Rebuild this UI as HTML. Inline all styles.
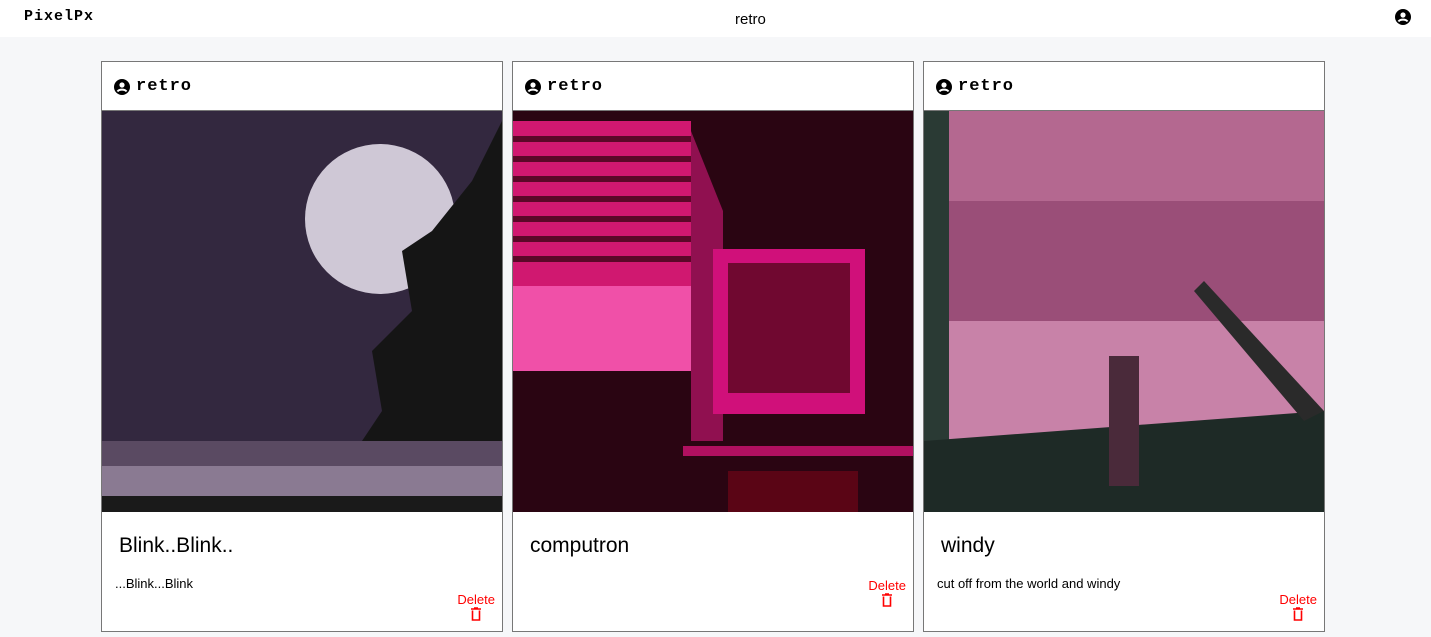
<!DOCTYPE html>
<html><head><style>
body{margin:0;width:1431px;height:637px;background:#f6f7f9;font-family:"Liberation Sans",sans-serif;overflow:hidden;position:relative}
.nav{position:absolute;top:0;left:0;width:1431px;height:37px;background:#fff}
.logo{position:absolute;left:24px;top:8px;font-family:"Liberation Mono",monospace;font-weight:bold;font-size:15px;letter-spacing:1px}
.title{position:absolute;left:735px;top:11px;font-size:15px}
.card{position:absolute;top:61px;width:400px;height:569px;border:1px solid #777;background:#fff;box-sizing:content-box}
.hd{height:48px;border-bottom:1px solid #777;position:relative}
.hd span{position:absolute;left:34px;top:15px;font-family:"Liberation Mono",monospace;font-weight:bold;font-size:17px;letter-spacing:1px}
.img{width:400px;height:401px;position:relative;overflow:hidden}
.t{position:absolute;left:17px;top:472px;font-size:21px}
.d{position:absolute;left:13px;top:514px;font-size:13px}
.del{position:absolute;right:7px;color:red;font-size:13px;text-align:center}
</style></head><body>
<div class="nav"><div class="logo">PixelPx</div><div class="title">retro</div>
<svg style="position:absolute;left:1395px;top:9px" width="16" height="16" viewBox="0 0 16 16"><circle cx="8" cy="8" r="8"/><circle cx="8" cy="6" r="2.6" fill="#fff"/><path d="M3.5 12.5c1.5-2.5 7.5-2.5 9 0" stroke="#fff" stroke-width="2" fill="none"/></svg></div>

<div class="card" style="left:101px">
<div class="hd"><svg style="position:absolute;left:12px;top:17px" width="16" height="16" viewBox="0 0 16 16"><circle cx="8" cy="8" r="8"/><circle cx="8" cy="6" r="2.6" fill="#fff"/><path d="M3.5 12.5c1.5-2.5 7.5-2.5 9 0" stroke="#fff" stroke-width="2" fill="none"/></svg><span>retro</span></div>
<div class="img"><svg width="400" height="401"><rect width="400" height="401" fill="#33283f"/><circle cx="278" cy="108" r="75" fill="#cfc8d6"/><path d="M400 10 L370 70 L330 120 L300 140 L310 200 L270 240 L280 300 L260 330 L400 340Z" fill="#151515"/><rect y="330" width="400" height="71" fill="#5a4a62"/><rect y="355" width="400" height="46" fill="#8a7a92"/><rect y="385" width="400" height="16" fill="#1a1a1a"/></svg></div>
<div class="t">Blink..Blink..</div><div class="d">...Blink...Blink</div>
<div class="del" style="top:530px">Delete<br><svg width="12" height="14" viewBox="0 0 12 14"><path d="M1 2h10M4 1h4M2.5 3.5v9.5h7v-9.5" stroke="red" stroke-width="1.6" fill="none"/></svg></div>
</div>

<div class="card" style="left:512px">
<div class="hd"><svg style="position:absolute;left:12px;top:17px" width="16" height="16" viewBox="0 0 16 16"><circle cx="8" cy="8" r="8"/><circle cx="8" cy="6" r="2.6" fill="#fff"/><path d="M3.5 12.5c1.5-2.5 7.5-2.5 9 0" stroke="#fff" stroke-width="2" fill="none"/></svg><span>retro</span></div>
<div class="img"><svg width="400" height="401"><rect width="400" height="401" fill="#2a0512"/><rect x="0" y="10" width="178" height="165" fill="#d01870"/><g fill="#5a0828"><rect y="25" width="178" height="6"/><rect y="45" width="178" height="6"/><rect y="65" width="178" height="6"/><rect y="85" width="178" height="6"/><rect y="105" width="178" height="6"/><rect y="125" width="178" height="6"/><rect y="145" width="178" height="6"/></g><rect y="175" width="178" height="85" fill="#f050a8"/><path d="M178 20 L210 100 L210 330 L178 330Z" fill="#901050"/><rect x="200" y="138" width="152" height="165" fill="#d0107a"/><rect x="215" y="152" width="122" height="130" fill="#700830"/><rect x="170" y="335" width="230" height="10" fill="#b01060"/><rect x="215" y="360" width="130" height="41" fill="#5a0515"/></svg></div>
<div class="t">computron</div>
<div class="del" style="top:516px">Delete<br><svg width="12" height="14" viewBox="0 0 12 14"><path d="M1 2h10M4 1h4M2.5 3.5v9.5h7v-9.5" stroke="red" stroke-width="1.6" fill="none"/></svg></div>
</div>

<div class="card" style="left:923px">
<div class="hd"><svg style="position:absolute;left:12px;top:17px" width="16" height="16" viewBox="0 0 16 16"><circle cx="8" cy="8" r="8"/><circle cx="8" cy="6" r="2.6" fill="#fff"/><path d="M3.5 12.5c1.5-2.5 7.5-2.5 9 0" stroke="#fff" stroke-width="2" fill="none"/></svg><span>retro</span></div>
<div class="img"><svg width="400" height="401"><rect width="400" height="401" fill="#b46890"/><rect y="90" width="400" height="130" fill="#9a4e78"/><rect y="210" width="400" height="120" fill="#c882a8"/><rect x="0" width="25" height="401" fill="#2a3a34"/><path d="M0 330 L400 300 L400 401 L0 401Z" fill="#1e2a26"/><rect x="185" y="245" width="30" height="130" fill="#4a2a3a"/><path d="M280 170 L400 300 L380 310 L270 180Z" fill="#2a2a2a"/></svg></div>
<div class="t">windy</div><div class="d">cut off from the world and windy</div>
<div class="del" style="top:530px">Delete<br><svg width="12" height="14" viewBox="0 0 12 14"><path d="M1 2h10M4 1h4M2.5 3.5v9.5h7v-9.5" stroke="red" stroke-width="1.6" fill="none"/></svg></div>
</div>
</body></html>
